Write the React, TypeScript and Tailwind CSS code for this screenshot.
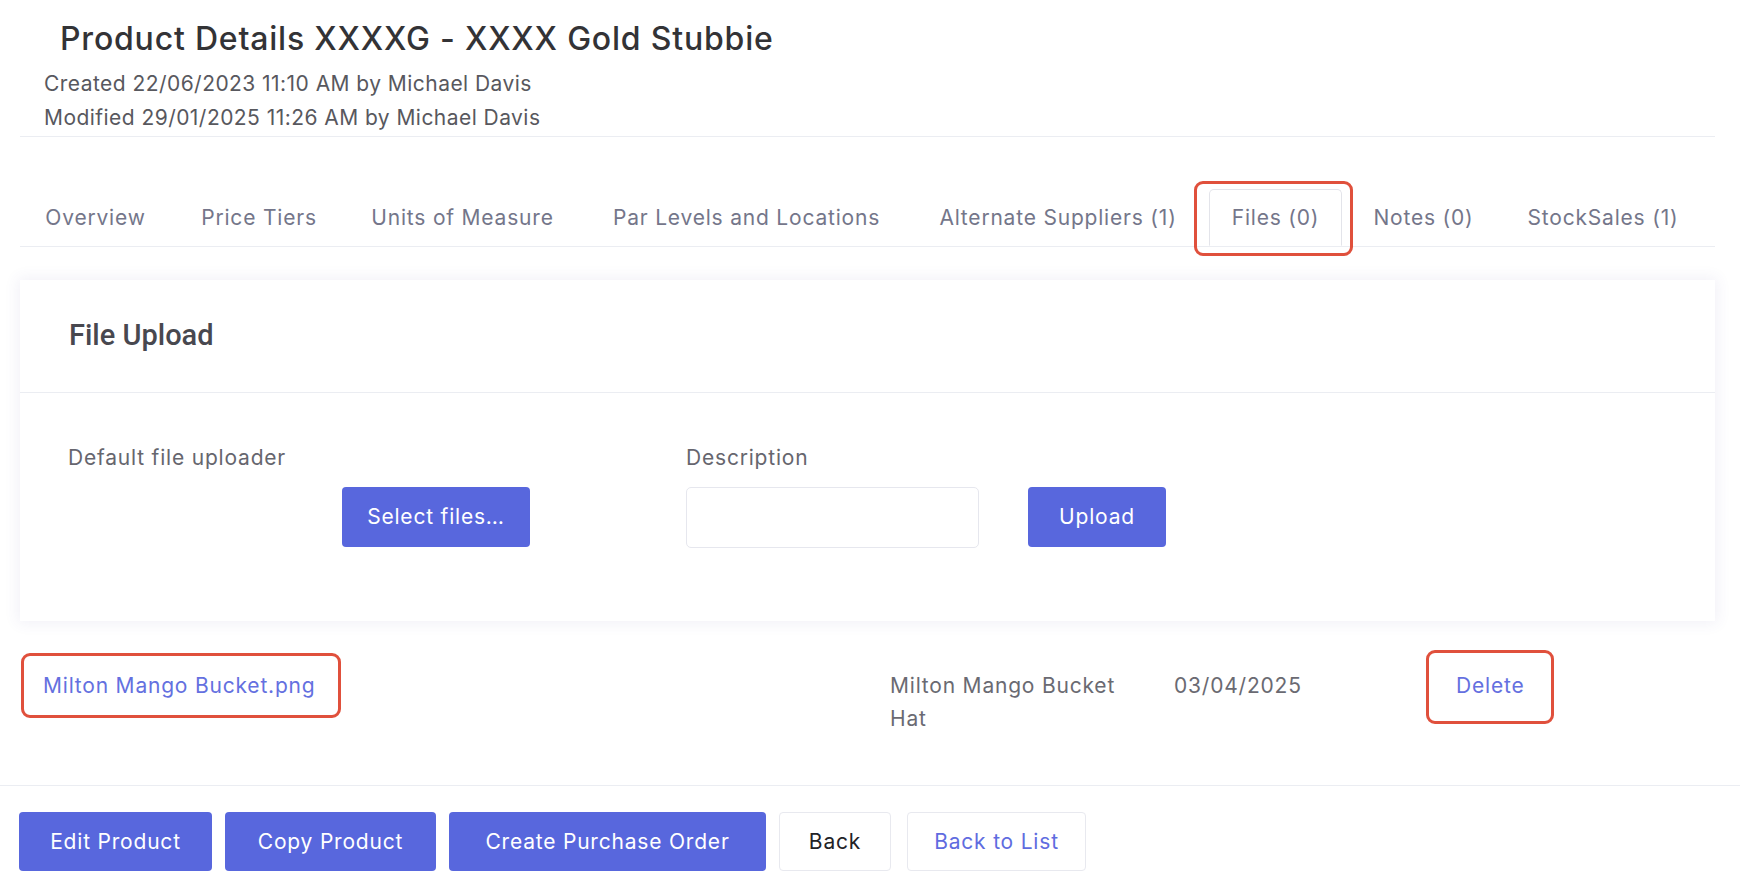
import React from "react";

const tabs = [
  { label: "Overview", w: "w-[151px]" },
  { label: "Price Tiers", w: "w-[160px]" },
  { label: "Units of Measure", w: "w-[231px]" },
  { label: "Par Levels and Locations", w: "w-[321px]" },
  { label: "Alternate Suppliers (1)", w: "w-[286px]" },
  { label: "Files (0)", w: "w-[133px]", active: true },
  { label: "Notes (0)", w: "w-[147px]" },
  { label: "StockSales (1)", w: "w-[196px]" },
];

export default function App() {
  return (
    <div className="w-[1740px] h-[888px] bg-white overflow-hidden text-[#5f6068] font-['Inter',sans-serif]">
      <div className="pl-[20px] pr-[25px]">
        {/* Header */}
        <div className="border-b border-[#ebedf2] pb-[1px]">
          <h1 className="ml-[40px] pt-[21px] text-[32px] leading-[36px] font-medium text-[#333336] tracking-[0.8px]">
            Product Details XXXXG - XXXX Gold Stubbie
          </h1>
          <div className="ml-[24px] mt-[10px] text-[21px] leading-[34px] text-[#58585e] tracking-[0.45px]">
            <div>Created 22/06/2023 11:10 AM by Michael Davis</div>
            <div>Modified 29/01/2025 11:26 AM by Michael Davis</div>
          </div>
        </div>

        {/* Tabs */}
        <div className="mt-[52px] flex gap-[8px] border-b border-[#ebedf2]">
          {tabs.map((t) => (
            <div
              key={t.label}
              className={
                t.active
                  ? `relative ${t.w} h-[57px] -mb-px flex items-center justify-center rounded-t-[5px] border border-[#e3e4ea] border-b-white bg-white text-[21px] tracking-[0.8px] text-[#74768a] whitespace-nowrap`
                  : `${t.w} h-[57px] flex items-center justify-center text-[21px] tracking-[0.8px] text-[#74768a] whitespace-nowrap`
              }
            >
              {t.label}
              {t.active && (
                <div className="absolute left-[-16px] right-[-12px] top-[-9px] bottom-[-11px] rounded-[9px] border-[3px] border-[#e0503c] pointer-events-none" />
              )}
            </div>
          ))}
        </div>

        {/* Card */}
        <div className="mt-[33px] bg-white shadow-[0px_0px_14px_2px_rgba(82,63,155,0.08)]">
          <div className="h-[113px] border-b border-[#ebedf2] flex items-center pl-[49px]">
            <span className="font-['Roboto',sans-serif] font-medium text-[29px] text-[#48484f]">
              File Upload
            </span>
          </div>
          <div className="pt-[50px] pb-[73px] pl-[48px] flex text-[21px] tracking-[0.8px]">
            <div className="w-[618px]">
              <div className="leading-[30px] text-[#66666e]">Default file uploader</div>
              <button className="mt-[14px] ml-[274px] w-[188px] h-[60px] rounded-[4px] bg-[#5867dd] text-white">
                Select files…
              </button>
            </div>
            <div className="w-[342px]">
              <div className="leading-[30px] text-[#66666e]">Description</div>
              <input
                className="mt-[14px] w-[293px] h-[61px] rounded-[5px] border border-[#e6e7ee] outline-none"
                type="text"
              />
            </div>
            <div className="pt-[44px]">
              <button className="w-[138px] h-[60px] rounded-[4px] bg-[#5867dd] text-white">
                Upload
              </button>
            </div>
          </div>
        </div>

        {/* File row */}
        <div className="flex pt-[48px] h-[164px] text-[21px] leading-[33px] tracking-[0.8px]">
          <div className="w-[870px] pl-[23px]">
            <span className="relative text-[#6470e0]">
              Milton Mango Bucket.png
              <span className="absolute left-[-22px] right-[-26px] top-[-20px] bottom-[-20px] rounded-[9px] border-[3px] border-[#e0503c]" />
            </span>
          </div>
          <div className="w-[284px] pr-[36px] text-[#6a6a72]">Milton Mango Bucket Hat</div>
          <div className="w-[282px] text-[#6a6a72]">03/04/2025</div>
          <div>
            <span className="relative text-[#6470e0]">
              Delete
              <span className="absolute left-[-30px] right-[-30px] top-[-23px] bottom-[-26px] rounded-[9px] border-[3px] border-[#e0503c]" />
            </span>
          </div>
        </div>
      </div>

      {/* Footer */}
      <div className="border-t border-[#ebedf2] pt-[26px] pl-[19px] flex gap-[13px] text-[21px] tracking-[0.8px]">
        <button className="w-[193px] h-[59px] rounded-[4px] bg-[#5867dd] text-white">Edit Product</button>
        <button className="w-[211px] h-[59px] rounded-[4px] bg-[#5867dd] text-white">Copy Product</button>
        <button className="w-[317px] h-[59px] rounded-[4px] bg-[#5867dd] text-white">Create Purchase Order</button>
        <button className="w-[112px] h-[59px] rounded-[4px] bg-white border border-[#e8e9ef] text-[#222226]">Back</button>
        <button className="ml-[3px] w-[179px] h-[59px] rounded-[4px] bg-white border border-[#e8e9ef] text-[#5f6ce0]">Back to List</button>
      </div>
    </div>
  );
}
